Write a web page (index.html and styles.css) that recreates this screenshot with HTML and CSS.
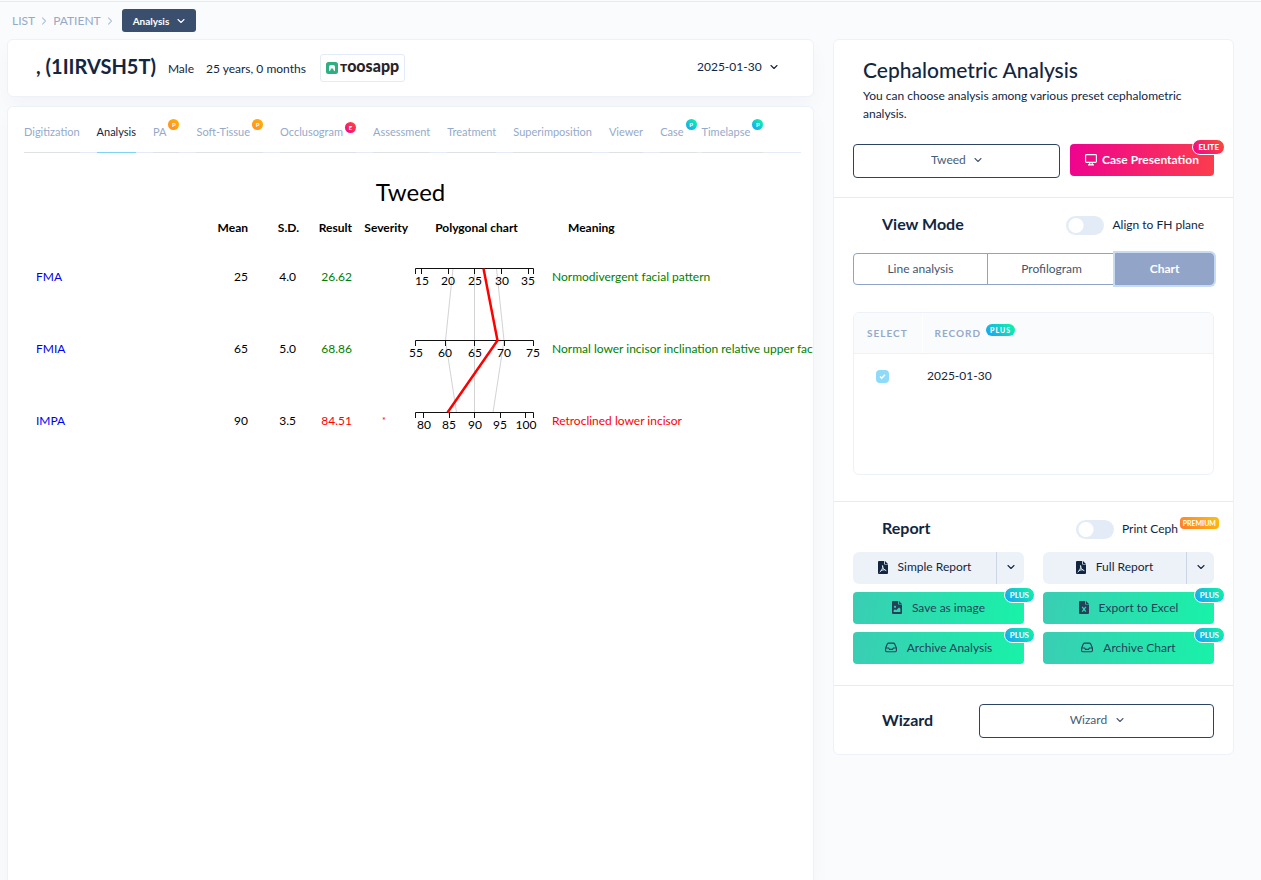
FILE: index.html
```html
<!DOCTYPE html>
<html lang="en">
<head>
<meta charset="utf-8">
<meta name="viewport" content="width=device-width, initial-scale=1">
<title>Cephalometric Analysis</title>
<link rel="stylesheet" href="styles.css">
</head>
<body>
<svg class="defs" aria-hidden="true">
  <symbol id="chev" viewBox="0 0 8 8"><path d="M1 2.5 4 5.5 7 2.5" fill="none" stroke="currentColor" stroke-width="1.1" stroke-linecap="round" stroke-linejoin="round"/></symbol>
  <symbol id="sep" viewBox="0 0 8 8"><path d="M2.5 .8 5.5 4 2.5 7.2" fill="none" stroke="currentColor" stroke-width="1.1" stroke-linecap="round" stroke-linejoin="round"/></symbol>
  <symbol id="pdf" viewBox="0 0 10 13"><path d="M1 0H6.2V3.6H10V12a1 1 0 0 1-1 1H1a1 1 0 0 1-1-1V1A1 1 0 0 1 1 0ZM7 0 10 2.9H7Z" fill="currentColor"/><path d="M4.5 4.8C5.2 7.4 5.6 8.8 8 9.6M4.7 5C4.8 7.6 3.8 9.6 2 10.9M3.2 9.3 6.8 8.7" fill="none" stroke="#edf2f9" stroke-width=".9" stroke-linecap="round"/></symbol>
  <symbol id="img" viewBox="0 0 10 13"><path d="M1 0H6.2V3.6H10V12a1 1 0 0 1-1 1H1a1 1 0 0 1-1-1V1A1 1 0 0 1 1 0ZM7 0 10 2.9H7Z" fill="currentColor"/><circle cx="3" cy="5.8" r="1.1" fill="#2dd8b0"/><path d="M1.6 10.9V9.6L3 8.2 4.2 9.3 7 6.4 8.4 7.8V10.9Z" fill="#2dd8b0"/></symbol>
  <symbol id="xls" viewBox="0 0 10 13"><path d="M1 0H6.2V3.6H10V12a1 1 0 0 1-1 1H1a1 1 0 0 1-1-1V1A1 1 0 0 1 1 0ZM7 0 10 2.9H7Z" fill="currentColor"/><path d="M3.2 5.9 6.8 10.7M6.8 5.9 3.2 10.7" stroke="#2dd8b0" stroke-width="1.3"/></symbol>
  <symbol id="inbox" viewBox="0 0 12 11"><path d="M.6 6 2.3 2Q2.7 1.1 3.6 1.1H8.4Q9.3 1.1 9.7 2L11.4 6V8.6Q11.4 9.7 10.3 9.7H1.7Q.6 9.7 .6 8.6V6H3.7L4.5 7.4H7.5L8.3 6H11.4" fill="none" stroke="currentColor" stroke-width="1.1" stroke-linejoin="round"/></symbol>
  <symbol id="screen" viewBox="0 0 12 12"><path d="M1.5 .6H10.5Q11.4 .6 11.4 1.5V7.5Q11.4 8.4 10.5 8.4H1.5Q.6 8.4 .6 7.5V1.5Q.6 .6 1.5 .6ZM4.8 8.4V10.7M7.2 8.4V10.7M3 10.9H9" fill="none" stroke="currentColor" stroke-width="1.1"/></symbol>
</svg>

<nav class="crumbs" aria-label="Breadcrumb">
  <a href="#">LIST</a><svg class="chev"><use href="#sep"/></svg>
  <a href="#">PATIENT</a><svg class="chev"><use href="#sep"/></svg>
  <button class="crumb-btn" type="button">Analysis <svg class="chev"><use href="#chev"/></svg></button>
</nav>

<div class="page">
  <main class="main">
    <header class="card patient">
      <h1>, (1IIRVSH5T)</h1>
      <span class="fact">Male</span>
      <span class="fact">25 years, 0 months</span>
      <a class="logo" href="#">
        <svg viewBox="0 0 12 12" aria-hidden="true"><rect width="12" height="12" rx="2.5" fill="#2fae82"/><path d="M3 9.2V5Q3 3 5 3H7Q9 3 9 5V9.2L7.3 8V6.5H4.7V8Z" fill="#fff"/></svg>
        <span class="logo-text"><small>T</small>oosapp</span>
      </a>
      <label class="date"><select aria-label="Record date"><option>2025-01-30</option></select><svg class="chev"><use href="#chev"/></svg></label>
    </header>

    <section class="card work">
      <nav class="tabs" aria-label="Sections">
        <a href="#">Digitization</a>
        <a href="#" class="active">Analysis</a>
        <a href="#">PA<b class="dot gold">P</b></a>
        <a href="#">Soft-Tissue<b class="dot gold">P</b></a>
        <a href="#">Occlusogram<b class="dot low pink">E</b></a>
        <a href="#">Assessment</a>
        <a href="#">Treatment</a>
        <a href="#">Superimposition</a>
        <a href="#">Viewer</a>
        <a href="#" class="tight">Case<b class="dot teal">P</b></a>
        <a href="#">Timelapse<b class="dot teal">P</b></a>
      </nav>

      <h2 class="chart-title">Tweed</h2>
      <div class="clip">
        <table class="measures">
          <colgroup><col class="c-name"><col class="c-mean"><col class="c-sd"><col class="c-res"><col class="c-sev"><col class="c-chart"><col class="c-text"></colgroup>
          <thead>
            <tr><td></td><th>Mean</th><th>S.D.</th><th>Result</th><th>Severity</th><th class="mid">Polygonal chart</th><th class="meaning">Meaning</th></tr>
          </thead>
          <tbody>
            <tr>
              <td class="name"><a href="#">FMA</a></td><td>25</td><td class="sd">4.0</td><td class="ok">26.62</td><td></td>
              <td class="plot" rowspan="3">
                <svg width="137" height="216" viewBox="0 0 137 216" role="img" aria-label="Polygonal chart">
                  <g class="band"><path d="M45 27.5 37.5 99.5 48.5 171.5M66.5 27.5V171.5M88.5 27.5 96 99.5 85 171.5"/></g>
                  <g class="axis">
                    <path d="M7.5 33V27.5H125.5V33M13.5 27.5V33M40.5 27.5V33M66.5 27.5V33M93.5 27.5V33M120.5 27.5V33"/>
                    <path d="M7.5 105V99.5H125.5V105M37.5 99.5V105M66.5 99.5V105M96.5 99.5V105"/>
                    <path d="M7.5 177V171.5H125.5V177M15.5 171.5V177M41.5 171.5V177M66.5 171.5V177M92.5 171.5V177M117.5 171.5V177"/>
                  </g>
                  <g class="ticks">
                    <text x="14" y="44">15</text><text x="40" y="44">20</text><text x="67" y="44">25</text><text x="94" y="44">30</text><text x="120" y="44">35</text>
                    <text x="8" y="116">55</text><text x="37" y="116">60</text><text x="67" y="116">65</text><text x="96" y="116">70</text><text x="125" y="116">75</text>
                    <text x="16" y="188">80</text><text x="41" y="188">85</text><text x="67" y="188">90</text><text x="92" y="188">95</text><text x="118" y="188">100</text>
                  </g>
                  <path class="trace" d="M75.5 27.5 89.5 99.5 39.5 171.5"/>
                </svg>
              </td>
              <td class="meaning ok">Normodivergent facial pattern</td>
            </tr>
            <tr><td class="name"><a href="#">FMIA</a></td><td>65</td><td class="sd">5.0</td><td class="ok">68.86</td><td></td><td class="meaning ok">Normal lower incisor inclination relative upper facial plane</td></tr>
            <tr><td class="name"><a href="#">IMPA</a></td><td>90</td><td class="sd">3.5</td><td class="bad">84.51</td><td class="star bad">*</td><td class="meaning bad">Retroclined lower incisor</td></tr>
          </tbody>
        </table>
      </div>
    </section>
  </main>

  <aside class="card side">
    <section class="intro">
      <h2>Cephalometric Analysis</h2>
      <p>You can choose analysis among various preset cephalometric analysis.</p>
      <div class="row">
        <label class="picker"><select aria-label="Analysis preset"><option>Tweed</option></select><svg class="chev"><use href="#chev"/></svg></label>
        <button class="present" type="button"><svg><use href="#screen"/></svg>Case Presentation<b class="tag pink">ELITE</b></button>
      </div>
    </section>

    <section class="view">
      <div class="head">
        <h3>View Mode</h3>
        <label class="switch"><input type="checkbox">Align to FH plane</label>
      </div>
      <div class="group" role="group" aria-label="View mode">
        <button type="button">Line analysis</button>
        <button type="button">Profilogram</button>
        <button type="button" class="on" aria-pressed="true">Chart</button>
      </div>
      <div class="records">
        <table>
          <thead><tr><th>SELECT</th><th>RECORD<b class="plus teal">PLUS</b></th></tr></thead>
          <tbody><tr><td class="pick"><input id="rec" type="checkbox" checked></td><td><label for="rec">2025-01-30</label></td></tr></tbody>
        </table>
      </div>
    </section>

    <section class="report">
      <div class="head">
        <h3>Report</h3>
        <label class="switch print"><input type="checkbox">Print Ceph<b class="premium">PREMIUM</b></label>
      </div>
      <div class="actions">
        <div class="split"><button type="button"><svg class="file"><use href="#pdf"/></svg>Simple Report</button><button type="button" aria-label="Simple report options"><svg class="chev"><use href="#chev"/></svg></button></div>
        <div class="split"><button type="button"><svg class="file"><use href="#pdf"/></svg>Full Report</button><button type="button" aria-label="Full report options"><svg class="chev"><use href="#chev"/></svg></button></div>
        <button class="green" type="button"><svg class="file"><use href="#img"/></svg>Save as image<b class="tag teal">PLUS</b></button>
        <button class="green" type="button"><svg class="file"><use href="#xls"/></svg>Export to Excel<b class="tag teal">PLUS</b></button>
        <button class="green" type="button"><svg class="tray"><use href="#inbox"/></svg>Archive Analysis<b class="tag teal">PLUS</b></button>
        <button class="green" type="button"><svg class="tray"><use href="#inbox"/></svg>Archive Chart<b class="tag teal">PLUS</b></button>
      </div>
    </section>

    <section class="wizard">
      <h3>Wizard</h3>
      <label class="picker"><select aria-label="Wizard"><option>Wizard</option></select><svg class="chev"><use href="#chev"/></svg></label>
    </section>
  </aside>
</div>
</body>
</html>
```
FILE: styles.css
```css
* { box-sizing: border-box; }
body {
  margin: 0;
  min-height: 100vh;
  display: flex;
  flex-direction: column;
  background: #f9fbfd;
  color: #12263f;
  font: 12px/18px Lato, "Open Sans", sans-serif;
}
h1, h2, h3, p { margin: 0; font-weight: 400; }
a { color: inherit; text-decoration: none; }
button, select, input { font: inherit; color: inherit; margin: 0; }
button { border: 0; padding: 0; background: none; cursor: pointer; }
select { appearance: none; border: 0; padding: 0; background: none; }
svg { flex: none; }
.defs { position: absolute; width: 0; height: 0; }
.chev { width: 8px; height: 8px; }

.crumbs {
  display: flex;
  align-items: center;
  gap: 5px;
  margin-top: 1px;
  padding: 7px 12px;
  border-top: 1px solid #e3ebf6;
  color: #95aac9;
}
.crumbs > .chev { color: #b1c2d9; }
.crumbs .crumb-btn {
  display: flex;
  align-items: center;
  gap: 8px;
  margin-left: 3px;
  padding: 0 11px;
  height: 23px;
  border-radius: 3px;
  background: #3a4f6d;
  color: #fff;
  font-size: 10px;
  font-weight: 700;
}

.page {
  flex: 1;
  display: grid;
  grid-template-columns: minmax(0, 1fr) 401px;
  gap: 19px;
  padding: 0 27px 0 7px;
}
.card {
  background: #fff;
  border: 1px solid #edf2f9;
  border-radius: 6px;
}
.main { display: flex; flex-direction: column; gap: 9px; }
.main .card { box-shadow: 0 10px 20px rgba(18, 38, 63, .03); }

.patient {
  display: flex;
  align-items: center;
  gap: 12px;
  height: 58px;
  padding: 0 35px 0 28px;
}
.patient h1 { font-size: 20px; line-height: 24px; padding-bottom: 4px; font-weight: 700; }
.fact { padding-top: 2px; }
.logo {
  display: flex;
  align-items: center;
  gap: 2px;
  width: 85px;
  height: 28px;
  margin-left: 2px;
  padding: 0 5px;
  border: 1px solid #e3ebf6;
  border-radius: 3px;
}
.logo svg { width: 12px; height: 12px; }
.logo-text { font-size: 16px; font-weight: 900; color: #2b2426; padding-bottom: 2px; }
.logo-text small { font-size: 12px; }
.date { display: flex; align-items: center; gap: 8px; margin-left: auto; padding-bottom: 2px; }

.work {
  flex: 1;
  border-bottom: 0;
  border-radius: 6px 6px 0 0;
  overflow: hidden;
}
.tabs {
  display: flex;
  gap: 17px;
  margin: 0 12px 0 16px;
  border-bottom: 1px solid #e3ebf6;
  color: #95aac9;
  font-size: 11px;
}
.tabs a {
  display: flex;
  padding: 16px 0 11px;
  margin-bottom: -1px;
  border-bottom: 1px solid #dee2e6;
}
.tabs .active { color: #12263f; border-color: #7fd3f3; }
.tabs .tight { margin-right: -12px; }
.dot {
  width: 11px;
  height: 11px;
  margin: -4px 0 0 2px;
  border-radius: 50%;
  color: #fff;
  font-size: 6px;
  line-height: 11px;
  text-align: center;
}
.dot.low { margin-top: -1px; }
.gold { background: linear-gradient(45deg, #fe8c2a, #ffb400); }
.pink { background: linear-gradient(45deg, #ee0290, #ff5030); }
.teal { background: linear-gradient(45deg, #1e9cfa, #0afba0); }

.chart-title { margin-top: 24px; color: #000; font-size: 24px; line-height: 30px; text-align: center; }
.clip { padding-left: 28px; overflow: hidden; }
.measures {
  width: 820px;
  table-layout: fixed;
  border-collapse: collapse;
  color: #000;
  white-space: nowrap;
}
.measures th, .measures td { padding: 0; text-align: right; }
.measures th { height: 34px; font-weight: 700; padding-top: 8px; }
.measures tbody tr { height: 72px; }
.c-name { width: 130px; }
.c-mean { width: 82px; }
.c-sd { width: 51px; }
.c-res { width: 53px; }
.c-sev { width: 56px; }
.c-chart { width: 137px; }
.measures .name { text-align: left; color: #0000ee; }
.measures .sd { padding-right: 3px; }
.measures .mid { text-align: center; }
.measures .meaning { text-align: left; padding-left: 7px; }
.measures th.meaning { padding-left: 23px; }
.measures .star { text-align: center; padding-left: 8px; font-size: 9px; }
.measures .ok { color: #008000; }
.measures .bad { color: #ff0000; }
.plot svg { display: block; }
.band path { fill: none; stroke: #d3d3d3; }
.axis path { fill: none; stroke: #111; }
.ticks text { font-size: 12px; text-anchor: middle; }
.trace { fill: none; stroke: #f00; stroke-width: 2.5px; }

.side { align-self: start; }
.side > section { padding-left: 19px; padding-right: 19px; }
.side > section + section { border-top: 1px solid #e3ebf6; }
.side h3 { padding: 0 0 2px 29px; font-size: 16px; line-height: 20px; font-weight: 700; }
.intro { padding-top: 17px; padding-bottom: 19px; }
.intro h2 { padding-left: 10px; font-size: 21px; line-height: 26px; font-weight: 500; }
.intro p { padding: 4px 10px 0; }
.row { display: flex; align-items: flex-start; gap: 10px; margin-top: 21px; }
.picker {
  flex: 1;
  display: flex;
  align-items: center;
  justify-content: center;
  gap: 8px;
  height: 34px;
  padding-bottom: 2px;
  border: 1px solid #2c4464;
  border-radius: 4px;
  color: #4a5b74;
}
.present {
  position: relative;
  display: flex;
  align-items: center;
  justify-content: center;
  gap: 5px;
  width: 144px;
  height: 32px;
  border-radius: 4px;
  background: linear-gradient(100deg, #ee0290, #fb3d4c);
  color: #fff;
  font-weight: 700;
}
.present svg { width: 12px; height: 12px; }
.tag {
  position: absolute;
  top: -5px;
  right: -11px;
  height: 16px;
  padding: 0 5px;
  border: 1px solid #fff;
  border-radius: 8px;
  color: #fff;
  font-size: 8px;
  line-height: 14px;
}

.head { display: flex; align-items: center; justify-content: space-between; }
.view { padding-top: 16px; padding-bottom: 26px; }
.switch { display: flex; align-items: center; gap: 8px; padding-right: 10px; }
.switch input {
  appearance: none;
  width: 38px;
  height: 19px;
  border-radius: 10px;
  background: radial-gradient(circle at 10px 50%, #fff 7px, #e3ebf6 8px);
}
.group { display: flex; margin-top: 17px; }
.group button {
  flex: 1 1 auto;
  height: 32px;
  margin-left: -1px;
  border: 1px solid #8fa3c8;
  color: #45556d;
}
.group button:first-child { margin-left: 0; border-radius: 4px 0 0 4px; }
.group .on {
  border-radius: 0 4px 4px 0;
  background: #92a5c9;
  color: #fff;
  font-weight: 700;
  box-shadow: 0 0 0 2px #c8dbf5;
}
.records {
  min-height: 163px;
  margin-top: 27px;
  border: 1px solid #edf2f9;
  border-radius: 6px;
  overflow: hidden;
}
.records table { width: 100%; border-collapse: collapse; }
.records th {
  height: 40px;
  padding: 1px 0 0 12px;
  border-bottom: 1px solid #edf2f9;
  background: #f9fbfd;
  color: #95aac9;
  font-size: 10px;
  letter-spacing: 1px;
  text-align: left;
}
.records th:first-child { width: 68px; padding-left: 13px; border-right: 1px solid #fff; }
.records td { height: 45px; padding: 0 0 0 5px; }
.records .pick { padding: 0 12px 0 0; text-align: center; }
.pick input {
  appearance: none;
  width: 13px;
  height: 13px;
  vertical-align: middle;
  border-radius: 4px;
  background: #8edaf8 url("data:image/svg+xml,%3Csvg xmlns='http://www.w3.org/2000/svg' viewBox='0 0 13 13'%3E%3Cpath d='M4 6.5 5.7 8.2 9 4.8' fill='none' stroke='white' stroke-width='1.6'/%3E%3C/svg%3E");
}
.plus, .premium {
  display: inline-block;
  height: 12px;
  margin-left: 5px;
  padding: 0 4px;
  border-radius: 6px;
  color: #fff;
  font-size: 7px;
  line-height: 12px;
  vertical-align: 4px;
}

.report { padding-top: 16px; padding-bottom: 21px; }
.print { position: relative; padding-right: 36px; }
.premium {
  position: absolute;
  top: -3px;
  right: -5px;
  padding: 0 3px;
  border-radius: 4px;
  background: linear-gradient(45deg, #ff7a2f, #ffc107);
}
.actions { display: grid; grid-template-columns: 1fr 1fr; gap: 8px 19px; margin-top: 12px; }
.split { display: flex; height: 32px; border-radius: 6px; background: #edf2f9; }
.split button { display: flex; align-items: center; justify-content: center; padding-bottom: 2px; }
.split button:first-child { flex: 1; gap: 10px; }
.split button:last-child { width: 28px; border-left: 1px solid #cbd5e3; }
.green {
  position: relative;
  display: flex;
  align-items: center;
  justify-content: center;
  gap: 10px;
  height: 32px;
  padding: 0 0 1px;
  border-radius: 4px;
  background: linear-gradient(100deg, #3acdb4, #18f2a8);
  color: #283e59;
}
.file { width: 10px; height: 13px; }
.tray { width: 12px; height: 11px; }

.wizard { display: flex; align-items: center; padding-top: 18px; padding-bottom: 16px; }
.wizard .picker { flex: 0 0 65%; margin-left: auto; }
```
